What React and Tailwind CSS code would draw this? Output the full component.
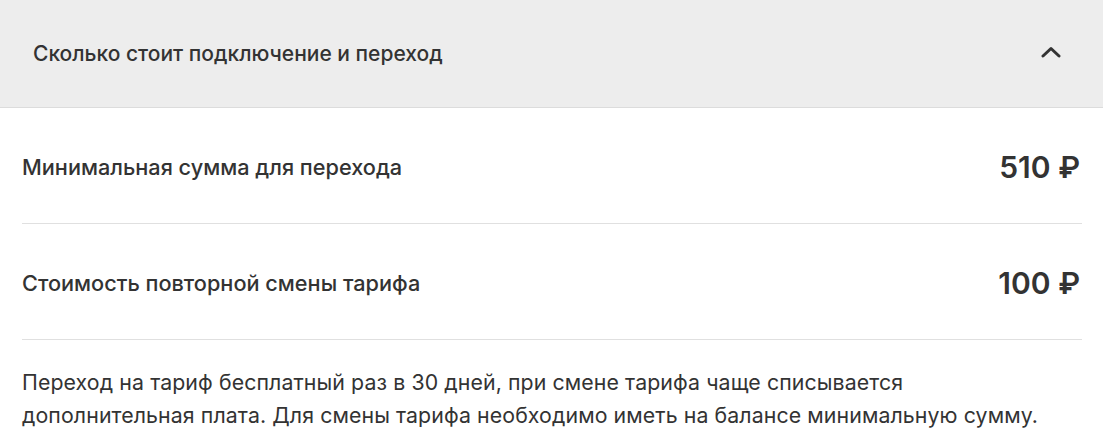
export default function App() {
  const rows = [
    { label: "Минимальная сумма для перехода", value: "510 ₽" },
    { label: "Стоимость повторной смены тарифа", value: "100 ₽" },
  ];

  return (
    <div className="w-[1103px] h-[440px] overflow-hidden bg-white text-[#333333] font-['Inter','Roboto',sans-serif]">
      {/* Accordion header */}
      <div className="h-[108px] bg-[#ededed] border-b border-[#dcdcdc] flex items-center justify-between pl-[33px] pr-[42px]">
        <span className="text-[21px] font-medium">Сколько стоит подключение и переход</span>
        <svg width="20" height="12" viewBox="0 0 20 12" className="mb-[4px]">
          <path d="M2 10 L10 2.5 L18 10" fill="none" stroke="#333333" strokeWidth="3" strokeLinecap="round" strokeLinejoin="round" />
        </svg>
      </div>

      <div className="pl-[22px] pr-[21px]">
        {rows.map((r) => (
          <div key={r.label} className="h-[116px] flex items-center justify-between border-b border-[#e0e0e0]">
            <span className="text-[21.7px] font-medium pt-[3px]">{r.label}</span>
            <span className="text-[30px] font-semibold pt-[3px] pr-[2px]">{r.value}</span>
          </div>
        ))}
        <p className="pt-[26px] text-[21.3px] leading-[33px] tracking-[0.1px]">
          Переход на тариф бесплатный раз в 30 дней, при смене тарифа чаще списывается
          <br />
          дополнительная плата. Для смены тарифа необходимо иметь на балансе минимальную сумму.
        </p>
      </div>
    </div>
  );
}
